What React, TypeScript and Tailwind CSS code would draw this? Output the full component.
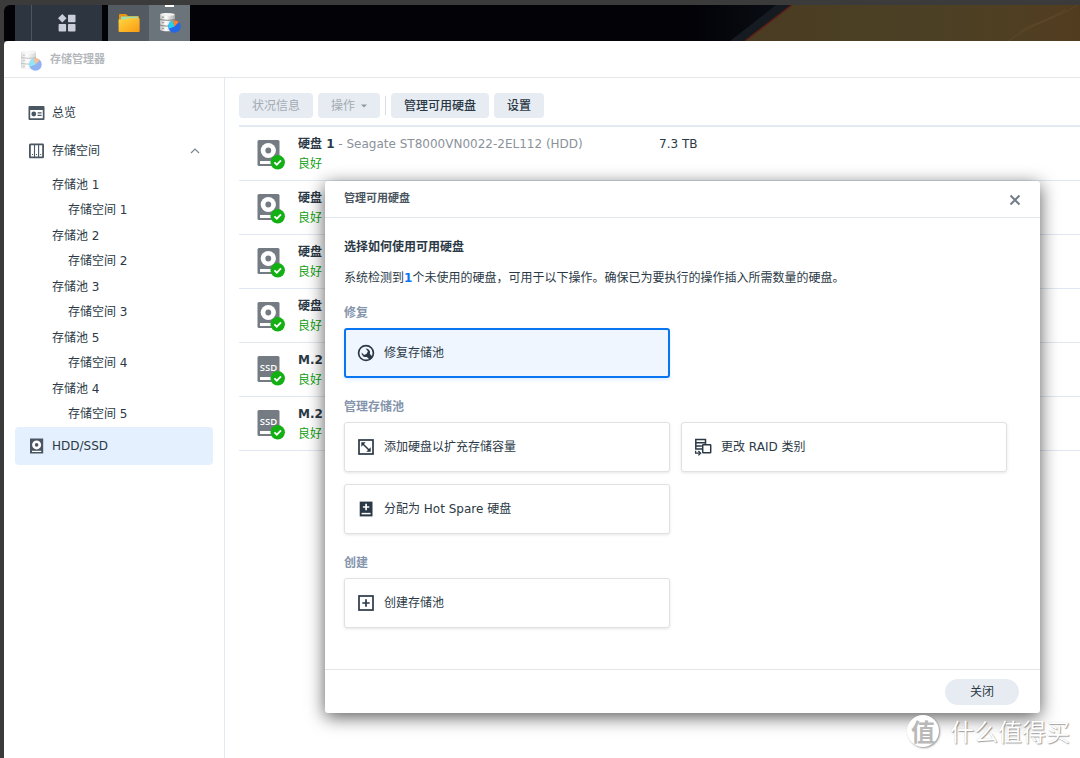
import React, { useState } from "react";

type Disk = {
  id: string;
  name: string;
  model?: string;
  size?: string;
  type: "hdd" | "ssd";
};

type Action = {
  id: string;
  label: string;
  icon: React.ReactNode;
};

const disks: Disk[] = [
  {
    id: "hdd1",
    name: "硬盘 1",
    model: "Seagate ST8000VN0022-2EL112 (HDD)",
    size: "7.3 TB",
    type: "hdd",
  },
  { id: "hdd2", name: "硬盘 2", type: "hdd" },
  { id: "hdd3", name: "硬盘 3", type: "hdd" },
  { id: "hdd4", name: "硬盘 4", type: "hdd" },
  { id: "ssd1", name: "M.2 1", type: "ssd" },
  { id: "ssd2", name: "M.2 2", type: "ssd" },
];

const pools = [
  { pool: "存储池 1", volume: "存储空间 1" },
  { pool: "存储池 2", volume: "存储空间 2" },
  { pool: "存储池 3", volume: "存储空间 3" },
  { pool: "存储池 5", volume: "存储空间 4" },
  { pool: "存储池 4", volume: "存储空间 5" },
];

function StorageIcon({ className }: { className?: string }) {
  return (
    <svg className={className} viewBox="0 0 22 22" aria-hidden="true">
      <defs>
        <linearGradient id="drum" x1="0" x2="1" y1="0" y2="0">
          <stop offset="0" stopColor="#b9b9b9" />
          <stop offset="0.4" stopColor="#ffffff" />
          <stop offset="1" stopColor="#a9a9a9" />
        </linearGradient>
      </defs>
      <path
        d="M1 2.6C1 1.4 4.200 1 8.500 1S16 1.400 16 2.600V17.400C16 18.600 12.800 19.200 8.500 19.200S1 18.600 1 17.400Z"
        fill="url(#drum)"
      />
      <ellipse cx="8.500" cy="2.700" rx="7" ry="1.300" fill="#f2f2f2" />
      <path
        d="M1 7.200c2 1.400 13 1.400 15 0M1 13c2 1.400 13 1.400 15 0"
        fill="none"
        stroke="#777"
        strokeWidth="0.9"
      />
      <path d="M3 5.200h2M3 10.600h2M3 16.400h2" stroke="#888" strokeWidth="0.9" />
      <circle cx="15.500" cy="14.500" r="6.200" fill="#2468e8" />
      <path
        d="M15.500 14.500L9.700 16.700A6.200 6.200 0 0 1 14 8.500Z"
        fill="#22d3f0"
      />
      <path
        d="M15.500 14.500L13.600 8.600A6.200 6.200 0 0 1 19.900 10.100Z"
        fill="#f9812a"
      />
    </svg>
  );
}

function FolderIcon() {
  return (
    <svg className="h-5 w-[22px]" viewBox="0 0 22 20" aria-hidden="true">
      <defs>
        <linearGradient id="folder" x1="0" x2="1" y1="0" y2="1">
          <stop offset="0" stopColor="#ffd640" />
          <stop offset="1" stopColor="#fa9b12" />
        </linearGradient>
      </defs>
      <path d="M1 2q0-1 1-1h6l2 2h10q1 0 1 1v9H1z" fill="#e8940c" />
      <path d="M3 3.500h17v5H3z" fill="#9be0b4" />
      <path
        d="M.5 6.500h7l1.500-1.200h12q.6 0 .6.600V18q0 1-1 1H1.600q-1 0-1-1z"
        fill="url(#folder)"
      />
    </svg>
  );
}

function DiskIcon({ type }: { type: "hdd" | "ssd" }) {
  return (
    <svg className="h-[31px] w-7" viewBox="0 0 28 31" aria-hidden="true">
      <rect x="0.500" y="1" width="22" height="26" rx="1.500" fill="#747b83" />
      {type === "hdd" ? (
        <>
          <circle cx="11.300" cy="11.500" r="7.600" fill="#fff" />
          <circle cx="11.300" cy="11.500" r="2.900" fill="#747b83" />
        </>
      ) : (
        <text
          x="11.500"
          y="15.500"
          fontSize="9.500"
          fontWeight="600"
          textAnchor="middle"
          fill="#fff"
          fontFamily="Open Sans, sans-serif"
        >
          SSD
        </text>
      )}
      <rect x="3" y="22" width="17" height="3" fill="#fff" />
      <circle cx="20.700" cy="23.300" r="7.200" fill="#12b012" />
      <path
        d="M17.400 23.400l2.400 2.300 4.200-4.300"
        fill="none"
        stroke="#fff"
        strokeWidth="1.800"
      />
    </svg>
  );
}

const repairIcon = (
  <svg className="h-[18px] w-[18px]" viewBox="0 0 18 18" aria-hidden="true">
    <circle cx="9" cy="9" r="7.400" fill="none" stroke="currentColor" strokeWidth="1.700" />
    <path
      d="M8.600 4.600A4.100 4.100 0 0 1 12.900 9.900L16 13 13 16 9.900 12.900A4.100 4.100 0 0 1 4.600 8.600L7.200 10.900 9.700 9.700 10.900 7.200Z"
      fill="currentColor"
    />
  </svg>
);

const expandIcon = (
  <svg className="h-[18px] w-[18px]" viewBox="0 0 18 18" aria-hidden="true">
    <rect x="2" y="2" width="14" height="14" fill="none" stroke="currentColor" strokeWidth="1.700" />
    <path d="M5.500 5.500l7 7" stroke="currentColor" strokeWidth="1.500" />
    <path d="M4.300 4.300h4.400l-4.400 4.400zM13.700 13.700V9.300l-4.400 4.400z" fill="currentColor" />
  </svg>
);

const raidIcon = (
  <svg
    className="h-[18px] w-[18px]"
    viewBox="0 0 18 18"
    fill="none"
    stroke="currentColor"
    strokeWidth="1.500"
    aria-hidden="true"
  >
    <path d="M8 11H1.800V1.500h9.700v5M1.800 4.700h9.700M1.800 7.900h6" />
    <rect x="8.700" y="6.800" width="8" height="8" rx="0.500" />
    <path d="M1.600 12.800v2.400h4M4.400 13l2.200 2.200-2.200 2.200" strokeWidth="1.300" />
  </svg>
);

const spareIcon = (
  <svg className="h-[18px] w-[18px]" viewBox="0 0 18 18" aria-hidden="true">
    <path d="M2.700 1.600h12.800v14.800H2.700z" fill="currentColor" />
    <path d="M9.100 3.800v6.400M5.900 7h6.400" stroke="#fff" strokeWidth="1.700" />
    <path d="M4.600 13.600h9" stroke="#fff" strokeWidth="1.500" />
  </svg>
);

const createIcon = (
  <svg
    className="h-[18px] w-[18px]"
    viewBox="0 0 18 18"
    fill="none"
    stroke="currentColor"
    strokeWidth="1.700"
    aria-hidden="true"
  >
    <rect x="2" y="2" width="14" height="14" />
    <path d="M9 5.300v7.400M5.300 9h7.400" />
  </svg>
);

const groups: { title: string; actions: Action[] }[] = [
  {
    title: "修复",
    actions: [{ id: "repair", label: "修复存储池", icon: repairIcon }],
  },
  {
    title: "管理存储池",
    actions: [
      { id: "expand", label: "添加硬盘以扩充存储容量", icon: expandIcon },
      { id: "raid", label: "更改 RAID 类别", icon: raidIcon },
      { id: "spare", label: "分配为 Hot Spare 硬盘", icon: spareIcon },
    ],
  },
  {
    title: "创建",
    actions: [{ id: "create", label: "创建存储池", icon: createIcon }],
  },
];

function Taskbar() {
  return (
    <div className="relative flex h-9 overflow-hidden rounded-tl-md bg-[#020207]">
      <svg
        className="absolute right-0 top-0 h-9 w-[390px]"
        viewBox="0 0 390 36"
        aria-hidden="true"
      >
        <defs>
          <linearGradient id="sand" x1="0" x2="1" y1="0" y2="0">
            <stop offset="0" stopColor="#4a3c22" />
            <stop offset="0.500" stopColor="#4b4025" />
            <stop offset="0.800" stopColor="#503f22" />
            <stop offset="1" stopColor="#523c20" />
          </linearGradient>
          <linearGradient id="night" x1="0" x2="1" y1="0" y2="0">
            <stop offset="0" stopColor="#020207" />
            <stop offset="1" stopColor="#0b0f16" />
          </linearGradient>
        </defs>
        <path d="M0 0h102L55 36H0z" fill="url(#night)" />
        <path d="M86 0h16L55 36H40z" fill="#161b22" />
        <path d="M102 0h288v36H55z" fill="url(#sand)" />
        <path d="M102 0L55 36" stroke="#5e2114" strokeWidth="1.500" />
        <path
          d="M388 0C366 14 342 18 318 36M376 4c-18 12-32 14-46 22"
          fill="none"
          stroke="#6a5433"
          strokeWidth="1"
          opacity="0.500"
        />
      </svg>
      <div className="relative ml-[11px] flex">
        <div className="w-4 bg-[#2c3540]" />
        <button
          aria-label="主菜单"
          className="flex w-[71px] items-center justify-center border-l border-[#4c5661] bg-[#2c3540]"
        >
          <svg className="h-[18px] w-[18px]" viewBox="0 0 18 18" fill="#c9ced8" aria-hidden="true">
            <path d="M4.300 0l4.300 4.300-4.300 4.300L0 4.300z" />
            <rect x="10" y="0.700" width="7.500" height="7.500" rx="0.800" />
            <rect x="0.600" y="10" width="7.500" height="7.500" rx="0.800" />
            <rect x="10" y="10" width="7.500" height="7.500" rx="0.800" />
          </svg>
        </button>
        <button
          aria-label="File Station"
          className="ml-1.5 flex w-[41px] items-center justify-center bg-[#535a62]"
        >
          <FolderIcon />
        </button>
        <button
          aria-label="存储管理器"
          className="relative flex w-[41px] items-center justify-center bg-[#6b737b]"
        >
          <span className="absolute left-4 top-0 h-0.5 w-[9px] bg-white" />
          <StorageIcon className="h-[22px] w-[22px]" />
        </button>
      </div>
    </div>
  );
}

function Sidebar() {
  return (
    <nav className="w-[221px] shrink-0 border-r border-[#e3e9f0] px-[11px] pt-4">
      <a href="#overview" className="flex h-[38px] items-center gap-[7px] pl-[13px]">
        <svg className="h-4 w-[17px]" viewBox="0 0 17 16" aria-hidden="true">
          <path
            d="M1.500 1h14q1 0 1 1v12q0 1-1 1h-14q-1 0-1-1V2q0-1 1-1zM2.200 5v8.300h12.600V5z"
            fill="#4a5662"
            fillRule="evenodd"
          />
          <circle cx="5.800" cy="9" r="2.400" fill="#4a5662" />
          <path d="M9.600 7.800h4M9.600 10.400h4" stroke="#4a5662" strokeWidth="1.300" />
        </svg>
        总览
      </a>
      <button className="flex h-[38px] w-full items-center gap-[7px] pl-[13px] pr-3">
        <svg className="h-4 w-[17px]" viewBox="0 0 17 16" aria-hidden="true">
          <rect x="1.900" y="1.400" width="13.200" height="13" rx="0.500" fill="none" stroke="#4a5662" strokeWidth="1.800" />
          <path d="M6.500 2v12M10.600 2v12" stroke="#4a5662" strokeWidth="1.100" />
          <path d="M4 11.500h1M8 11.500h1M12.200 11.500h1" stroke="#4a5662" strokeWidth="1" />
        </svg>
        存储空间
        <svg
          className="ml-auto h-2 w-3"
          viewBox="0 0 12 8"
          fill="none"
          stroke="#7c858f"
          strokeWidth="1.200"
          aria-hidden="true"
        >
          <path d="M2 6l4-4 4 4" />
        </svg>
      </button>
      <ul className="pt-0.5">
        {pools.map((p) => (
          <li key={p.pool}>
            <a href="#pool" className="block pl-[37px] leading-[26px]">
              {p.pool}
            </a>
            <a href="#volume" className="block pl-[53px] leading-[25px]">
              {p.volume}
            </a>
          </li>
        ))}
      </ul>
      <a
        href="#hdd"
        className="flex h-[38px] items-center gap-[7px] rounded bg-[#e4f0fd] pl-[13px]"
      >
        <svg className="h-4 w-[17px]" viewBox="0 0 17 16" aria-hidden="true">
          <rect x="2" y="0.500" width="13.200" height="15" fill="#4a5662" />
          <circle cx="8.600" cy="6.900" r="4.500" fill="#fff" />
          <circle cx="8.600" cy="6.900" r="1.800" fill="#4a5662" />
          <path d="M4 13.400h9.200" stroke="#fff" strokeWidth="1.200" />
        </svg>
        HDD/SSD
      </a>
    </nav>
  );
}

function ManageDialog({ onClose }: { onClose: () => void }) {
  const [selected, setSelected] = useState("repair");

  return (
    <div
      role="dialog"
      aria-labelledby="dialog-title"
      className="absolute left-[325px] right-10 top-[181px] rounded-[3px] bg-white shadow-[0_4px_18px_rgba(0,0,0,0.65)]"
    >
      <div className="flex h-[37px] items-center justify-between border-b border-[#dfe8f1] pl-[19px] pr-[19px] pt-px">
        <h2 id="dialog-title" className="text-[11px] font-bold text-[#4a5560]">
          管理可用硬盘
        </h2>
        <button aria-label="关闭窗口" onClick={onClose}>
          <svg
            className="h-3 w-3"
            viewBox="0 0 12 12"
            stroke="#747d87"
            strokeWidth="2"
            aria-hidden="true"
          >
            <path d="M1.500 1.500l9 9M10.500 1.500l-9 9" />
          </svg>
        </button>
      </div>

      <div className="pb-[41px] pl-[19px] pr-[33px] pt-[19px]">
        <h3 className="font-bold leading-5">选择如何使用可用硬盘</h3>
        <p className="mt-[11px] leading-5">
          系统检测到<strong className="text-[#0a75f0]">1</strong>
          个未使用的硬盘，可用于以下操作。确保已为要执行的操作插入所需数量的硬盘。
        </p>
        {groups.map((group) => (
          <section key={group.title} className="mt-[19px] first-of-type:mt-[15px]">
            <h4 className="font-bold leading-5 text-[#8494ab]">{group.title}</h4>
            <div className="mt-[5px] grid grid-cols-2 gap-x-[11px] gap-y-3">
              {group.actions.map((action) => (
                <button
                  key={action.id}
                  onClick={() => setSelected(action.id)}
                  className={
                    selected === action.id
                      ? "flex h-[50px] items-center gap-[9px] rounded-[3px] border-2 border-[#0a75f0] bg-[#eff6ff] pl-[11px] shadow-[0_2px_4px_rgba(10,117,240,0.12)]"
                      : "flex h-[50px] items-center gap-[9px] rounded-[3px] border border-[#e0e1e3] bg-white pl-3 shadow-[0_1px_3px_rgba(0,0,0,0.10)]"
                  }
                >
                  {action.icon}
                  {action.label}
                </button>
              ))}
            </div>
          </section>
        ))}
      </div>

      <div className="flex h-11 items-center justify-end border-t border-[#e2e5e8] pr-[21px]">
        <button
          onClick={onClose}
          className="h-[26px] w-[74px] rounded-full bg-[#e7ecf2]"
        >
          关闭
        </button>
      </div>
    </div>
  );
}

export default function App() {
  const [open, setOpen] = useState(true);

  return (
    <div className="relative flex min-h-screen flex-col overflow-hidden bg-[#3b3b3b] pl-1 pt-[5px] font-['DejaVu_Sans','Noto_Sans_CJK_SC',sans-serif] text-xs text-[#2b3946]">
      <Taskbar />
      <div className="flex flex-1 flex-col rounded-tl-sm bg-white">
        <header className="flex h-[37px] items-center gap-2 border-b border-[#e5e8eb] pl-4 pt-[3px]">
          <StorageIcon className="h-[22px] w-[22px] opacity-50" />
          <h1 className="text-[11px] font-bold text-[#b4b8bc]">存储管理器</h1>
        </header>

        <div className="flex flex-1">
          <Sidebar />
          <main className="min-w-0 flex-1 pl-[14px] pt-[15px]">
            <div className="flex items-center gap-[5px] pb-[7px]">
              <button disabled className="h-[25px] rounded-sm bg-[#e7ecf2] px-[13px] text-[#a3abb3]">
                状况信息
              </button>
              <button
                disabled
                className="flex h-[25px] items-center gap-1.5 rounded-sm bg-[#e7ecf2] px-[13px] text-[#a3abb3]"
              >
                操作
                <svg className="h-1 w-1.5" viewBox="0 0 6 4" fill="#8f979f" aria-hidden="true">
                  <path d="M0 0.500h6L3 3.500z" />
                </svg>
              </button>
              <span className="h-[19px] w-px bg-[#d5dce3]" />
              <button
                onClick={() => setOpen(true)}
                className="h-[25px] rounded-sm bg-[#e7ecf2] px-[13px] font-medium"
              >
                管理可用硬盘
              </button>
              <button className="h-[25px] rounded-sm bg-[#e7ecf2] px-[13px] font-medium">
                设置
              </button>
            </div>

            <table className="w-full table-fixed border-collapse border-t-2 border-[#e3eaf1]">
              <tbody>
                {disks.map((disk) => (
                  <tr key={disk.id} className="h-[54px] border-b border-[#dfe8f1]">
                    <td className="w-[59px] p-0 pl-[18px] pt-0.5">
                      <DiskIcon type={disk.type} />
                    </td>
                    <td className="w-[361px] p-0 pt-0.5">
                      <div className="leading-5">
                        <strong>{disk.name}</strong>
                        {disk.model && (
                          <span className="text-[#8a929a]"> - {disk.model}</span>
                        )}
                      </div>
                      <div className="leading-5 text-[#0fa00f]">良好</div>
                    </td>
                    <td className="p-0 align-top">
                      <div className="pt-[7px] leading-5">{disk.size}</div>
                    </td>
                  </tr>
                ))}
              </tbody>
            </table>
          </main>
        </div>
      </div>

      {open && <ManageDialog onClose={() => setOpen(false)} />}

      <div className="pointer-events-none absolute bottom-[11px] right-[10px] flex items-center gap-[11px] font-['Noto_Sans_CJK_SC',sans-serif] text-white">
        <span className="flex h-8 w-8 items-center justify-center rounded-full bg-white text-2xl font-bold leading-8 text-[#b9b9b9] shadow-[1px_1px_2px_rgba(0,0,0,0.4)]">
          值
        </span>
        <span className="text-2xl leading-8 [text-shadow:1px_1px_1px_rgba(0,0,0,0.35),0_0_1px_rgba(0,0,0,0.2)]">
          什么值得买
        </span>
      </div>
    </div>
  );
}
